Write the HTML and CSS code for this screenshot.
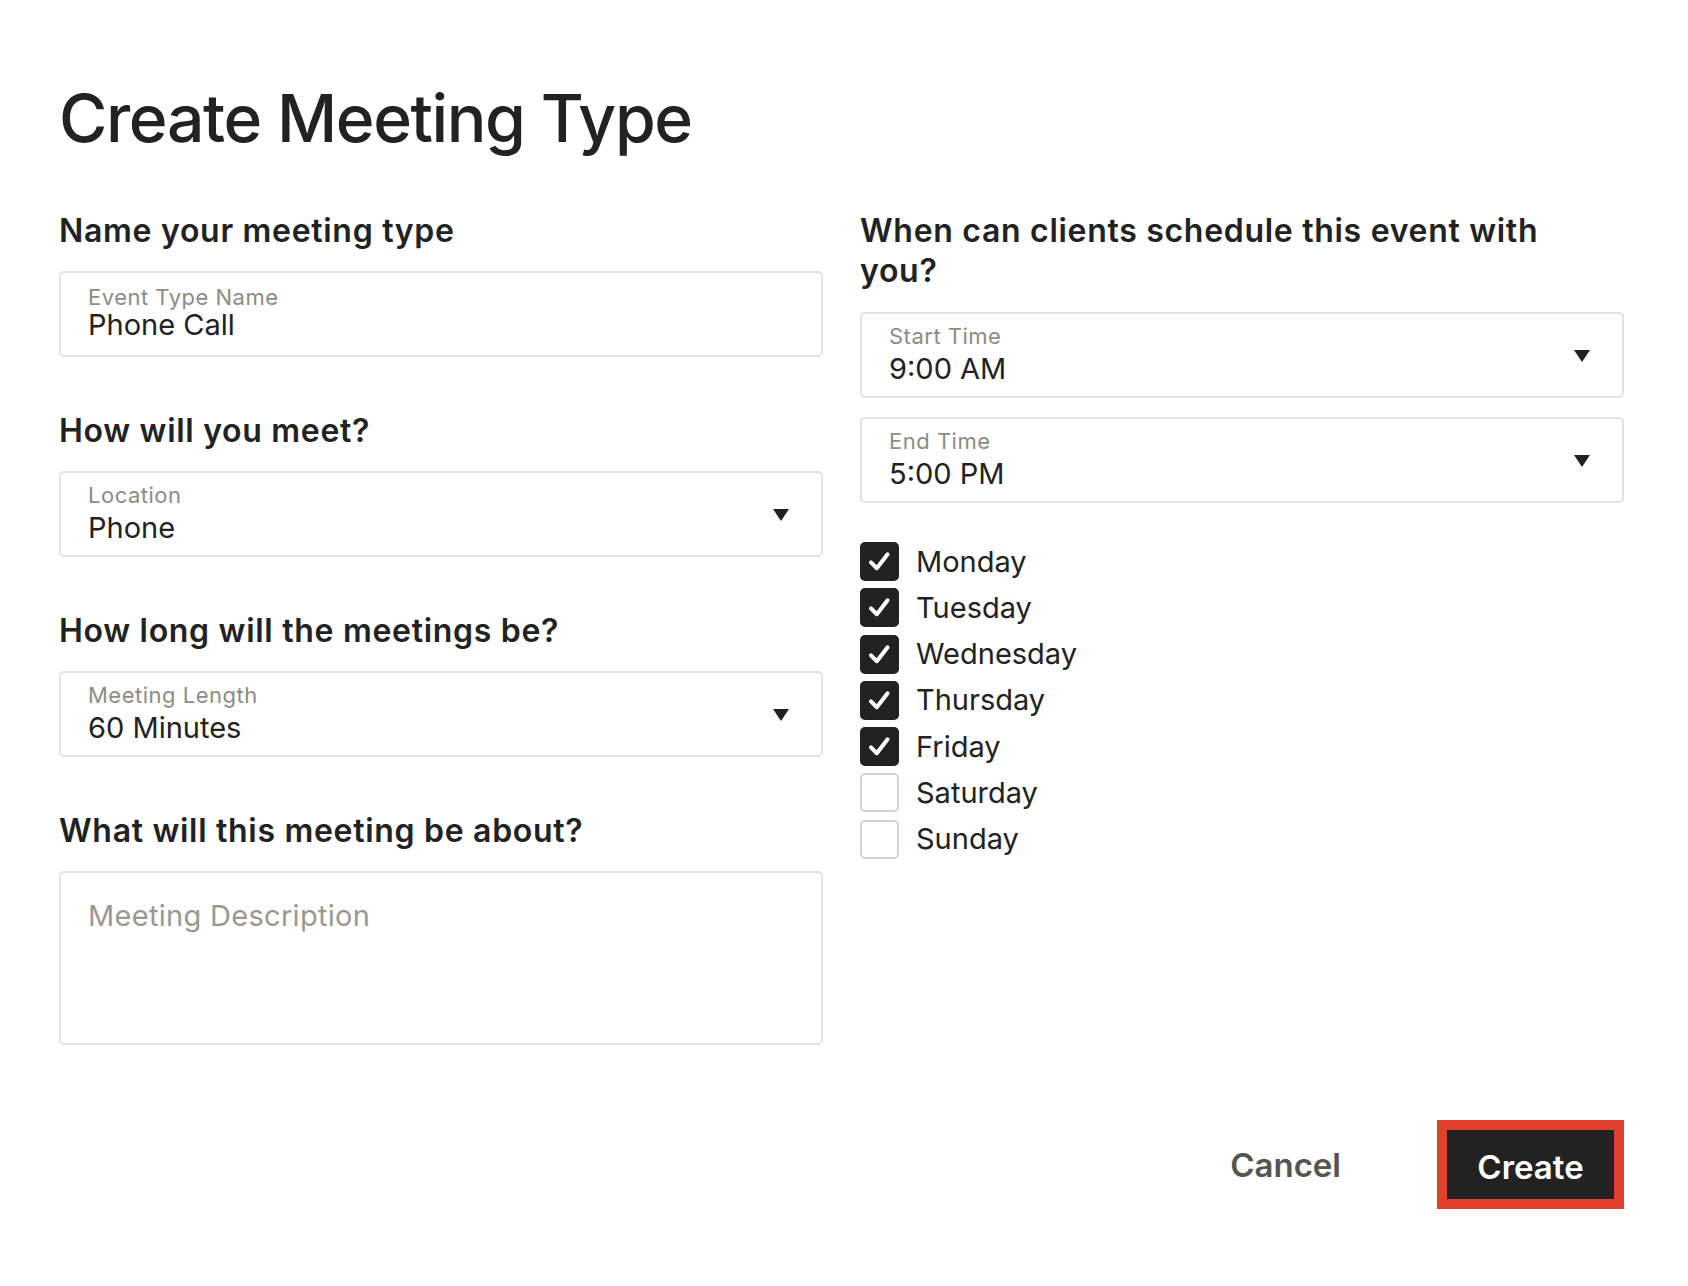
FILE: index.html
```html
<!DOCTYPE html>
<html lang="en">
<head>
<meta charset="utf-8">
<title>Create Meeting Type</title>
<link rel="stylesheet" href="styles.css">
</head>
<body>
<div class="page">
  <h1 class="title">Create Meeting Type</h1>
  <div class="columns">
    <div class="col">
      <section class="field">
        <h2 class="question">Name your meeting type</h2>
        <div class="box box-text">
          <div class="label">Event Type Name</div>
          <div class="value">Phone Call</div>
        </div>
      </section>
      <section class="field">
        <h2 class="question">How will you meet?</h2>
        <div class="box box-select">
          <div class="label">Location</div>
          <div class="value">Phone</div>
          <span class="caret"></span>
        </div>
      </section>
      <section class="field">
        <h2 class="question">How long will the meetings be?</h2>
        <div class="box box-select">
          <div class="label">Meeting Length</div>
          <div class="value">60 Minutes</div>
          <span class="caret"></span>
        </div>
      </section>
      <section class="field">
        <h2 class="question">What will this meeting be about?</h2>
        <div class="box box-area">
          <div class="placeholder">Meeting Description</div>
        </div>
      </section>
    </div>
    <div class="col">
      <h2 class="question question-wide">When can clients schedule this event with you?</h2>
      <div class="selects">
        <div class="box box-select">
          <div class="label">Start Time</div>
          <div class="value">9:00 AM</div>
          <span class="caret"></span>
        </div>
        <div class="box box-select">
          <div class="label">End Time</div>
          <div class="value">5:00 PM</div>
          <span class="caret"></span>
        </div>
      </div>
      <ul class="days">
        <li class="day"><span class="check on"><svg viewBox="0 0 39 39"><path d="M10 20.5 L16.5 27 L28.5 11.5" /></svg></span><span class="day-name">Monday</span></li>
        <li class="day"><span class="check on"><svg viewBox="0 0 39 39"><path d="M10 20.5 L16.5 27 L28.5 11.5" /></svg></span><span class="day-name">Tuesday</span></li>
        <li class="day"><span class="check on"><svg viewBox="0 0 39 39"><path d="M10 20.5 L16.5 27 L28.5 11.5" /></svg></span><span class="day-name">Wednesday</span></li>
        <li class="day"><span class="check on"><svg viewBox="0 0 39 39"><path d="M10 20.5 L16.5 27 L28.5 11.5" /></svg></span><span class="day-name">Thursday</span></li>
        <li class="day"><span class="check on"><svg viewBox="0 0 39 39"><path d="M10 20.5 L16.5 27 L28.5 11.5" /></svg></span><span class="day-name">Friday</span></li>
        <li class="day"><span class="check"></span><span class="day-name">Saturday</span></li>
        <li class="day"><span class="check"></span><span class="day-name">Sunday</span></li>
      </ul>
    </div>
  </div>
  <div class="actions">
    <button class="btn-cancel" type="button">Cancel</button>
    <button class="btn-create" type="button">Create</button>
  </div>
</div>
</body>
</html>
```

FILE: styles.css
```css
* { box-sizing: border-box; }

html, body {
  margin: 0;
  padding: 0;
  background: #ffffff;
}

body {
  font-family: Inter, "Noto Sans", sans-serif;
  color: #222222;
}

.page {
  padding: 78px 64px 0 59px;
}

.title {
  margin: 0 0 53px 0;
  font-size: 66px;
  line-height: 80px;
  font-weight: 500;
  letter-spacing: -1.4px;
  color: #222222;
}

.columns {
  display: grid;
  grid-template-columns: 764px 764px;
  column-gap: 37px;
  align-items: start;
}

.col {
  display: flex;
  flex-direction: column;
}

.field {
  display: flex;
  flex-direction: column;
  margin-bottom: 54px;
}

.field:last-child {
  margin-bottom: 0;
}

.question {
  margin: 0 0 20px 0;
  font-size: 32px;
  line-height: 40px;
  font-weight: 600;
  letter-spacing: 0.7px;
  color: #222222;
}

.question-wide {
  max-width: 720px;
  margin-bottom: 21px;
}

.box {
  position: relative;
  height: 86px;
  border: 2px solid #e3e2dc;
  border-radius: 5px;
  padding: 0 27px;
  background: #ffffff;
}

.box-text {
  padding-top: 12px;
}

.box-select {
  padding-top: 10px;
}

.box-select .value {
  margin-top: 5px;
}

.box-area {
  height: 174px;
  padding-top: 27px;
}

.label {
  font-size: 22px;
  line-height: 24px;
  letter-spacing: 0.5px;
  color: #8d8c84;
}

.value {
  font-size: 29px;
  line-height: 32px;
  color: #222222;
}

.placeholder {
  font-size: 29px;
  line-height: 32px;
  letter-spacing: 0.3px;
  color: #9a9990;
}

.caret {
  position: absolute;
  right: 32px;
  top: 50%;
  margin-top: -5px;
  width: 0;
  height: 0;
  border-left: 8px solid transparent;
  border-right: 8px solid transparent;
  border-top: 12px solid #222222;
}

.selects {
  display: flex;
  flex-direction: column;
  gap: 19px;
}

.days {
  list-style: none;
  margin: 39px 0 0 0;
  padding: 0;
  display: flex;
  flex-direction: column;
  gap: 7.3px;
}

.day {
  display: flex;
  align-items: center;
  gap: 17px;
  height: 39px;
}

.check {
  width: 39px;
  height: 39px;
  border-radius: 5px;
  border: 2px solid #d3d3d0;
  background: #ffffff;
  display: flex;
  flex-shrink: 0;
}

.check.on {
  background: #222222;
  border-color: #222222;
}

.check svg {
  width: 35px;
  height: 35px;
}

.check svg path {
  fill: none;
  stroke: #ffffff;
  stroke-width: 4.5;
  stroke-linecap: round;
  stroke-linejoin: round;
}

.day-name {
  font-size: 29px;
  line-height: 32px;
  color: #222222;
}

.actions {
  display: flex;
  justify-content: flex-end;
  align-items: center;
  gap: 88px;
  margin-top: 75px;
}

.btn-cancel {
  font-family: Inter, "Noto Sans", sans-serif;
  background: none;
  border: none;
  padding: 0 8px;
  font-size: 33px;
  font-weight: 600;
  color: #555550;
  cursor: pointer;
}

.btn-create {
  font-family: Inter, "Noto Sans", sans-serif;
  width: 187px;
  height: 89px;
  background: #222222;
  border: 10px solid #e2402a;
  border-radius: 0;
  color: #ffffff;
  font-size: 33px;
  font-weight: 600;
  padding: 5px 0 0 0;
  cursor: pointer;
}
```
